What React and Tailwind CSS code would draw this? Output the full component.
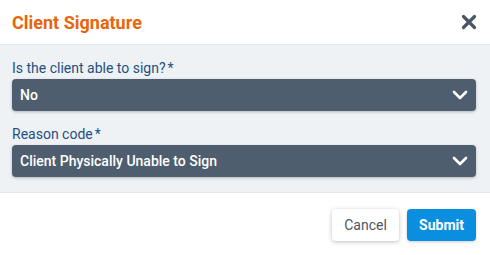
import { useState } from 'react'

function Chevron() {
  return (
    <svg width="16" height="10" viewBox="0 0 16 10" fill="none" className="shrink-0">
      <path d="M2 2l6 6 6-6" stroke="white" strokeWidth="2.6" strokeLinecap="round" strokeLinejoin="round" />
    </svg>
  )
}

function Field({ label, value }) {
  return (
    <div className="flex flex-col">
      <label className="text-[14px] leading-[18px] text-[#1f5080] mb-[2px]">
        {label}
        <span className="ml-[2px]">*</span>
      </label>
      <button className="h-8 w-full flex items-center justify-between pl-[8px] pr-[8px] rounded-[4px] bg-[#4f5e6e] text-white text-[14px] font-medium shadow-[0_1px_3px_rgba(0,0,0,0.25)]">
        <span>{value}</span>
        <Chevron />
      </button>
    </div>
  )
}

export default function App() {
  const [open, setOpen] = useState(true)
  if (!open) return null

  return (
    <div className="w-[490px] h-[255px] bg-white flex flex-col" style={{ fontFamily: 'Roboto, "Liberation Sans", sans-serif' }}>
      {/* Header */}
      <div className="h-[45px] flex items-center justify-between pl-[12px] pr-[13px] border-b border-[#e3e7eb]">
        <h2 className="text-[18px] font-bold text-[#e8650c] pt-[1px]">Client Signature</h2>
        <button onClick={() => setOpen(false)} className="p-0">
          <svg width="16" height="16" viewBox="0 0 16 16" fill="none">
            <path d="M2.5 2.5l11 11M13.5 2.5l-11 11" stroke="#4b5663" strokeWidth="3.2" strokeLinecap="round" />
          </svg>
        </button>
      </div>

      {/* Body */}
      <div className="bg-[#eef2f5] pl-[12px] pr-[14px] pt-[14px] pb-[15px] flex flex-col gap-[14px] border-b border-[#e3e7eb]">
        <Field label="Is the client able to sign?" value="No" />
        <Field label="Reason code" value="Client Physically Unable to Sign" />
      </div>

      {/* Footer */}
      <div className="flex justify-end gap-[8px] px-[14px] pt-[16px]">
        <button className="h-8 w-[67px] rounded-[4px] bg-white text-[#4b5663] text-[14px] shadow-[0_1px_4px_rgba(0,0,0,0.25)]">
          Cancel
        </button>
        <button className="h-8 w-[69px] rounded-[4px] bg-[#0a8fe0] text-white text-[14px] font-bold shadow-[0_1px_3px_rgba(0,0,0,0.2)]">
          Submit
        </button>
      </div>
    </div>
  )
}
